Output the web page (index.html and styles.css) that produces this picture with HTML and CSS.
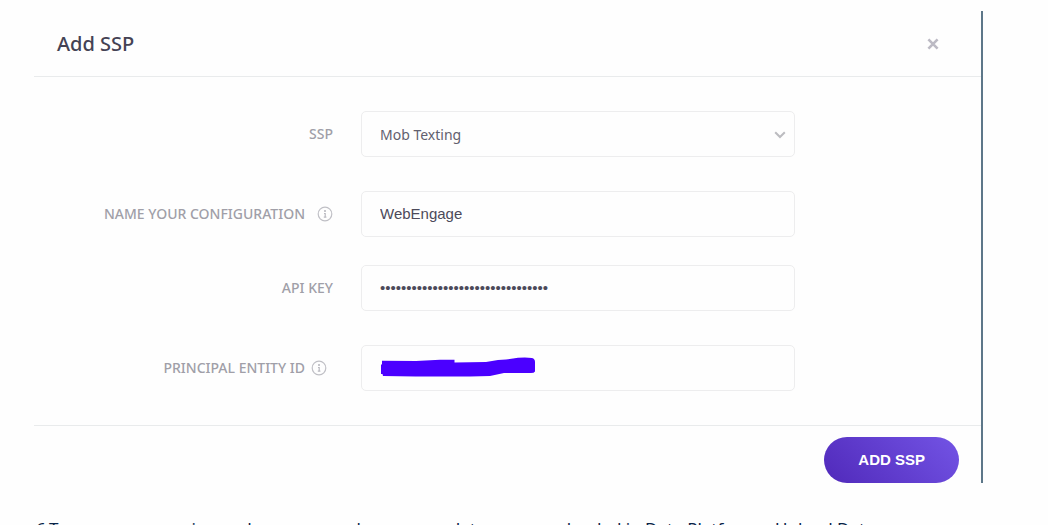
FILE: index.html
```html
<!DOCTYPE html>
<html lang="en">
<head>
<meta charset="utf-8">
<title>Add SSP</title>
<link rel="stylesheet" href="styles.css">
</head>
<body>
<main class="page">
  <section class="dialog" aria-labelledby="dialog-title">
    <header class="dialog-header">
      <h1 class="dialog-title" id="dialog-title">Add SSP</h1>
      <button class="close" type="button" aria-label="Close">
        <svg width="12" height="12" viewBox="0 0 12 12"><path d="M1.4 1.4 10.6 10.6M10.6 1.4 1.4 10.6" fill="none" stroke="#bcbac4" stroke-width="2.6"/></svg>
      </button>
    </header>
    <form class="form" id="ssp-form">
      <div class="row">
        <label class="label" for="ssp">SSP</label>
        <div class="field">
          <select class="control select" id="ssp"><option>Mob Texting</option></select>
          <svg class="chevron" width="12" height="8" viewBox="0 0 12 8"><path d="M1.2 1.2 6 6 10.8 1.2" fill="none" stroke="#bcbcc0" stroke-width="2"/></svg>
        </div>
      </div>
      <div class="row">
        <label class="label label-wide" for="name">NAME YOUR CONFIGURATION
          <svg class="info" width="16" height="16" viewBox="0 0 16 16"><circle cx="8" cy="8" r="6.8" fill="none" stroke="#c0c0c6" stroke-width="1.2"/><circle cx="8" cy="5" r="1" fill="#b4b4bb"/><path d="M7 7.500H8.200V11M6.800 11.100H9.400" fill="none" stroke="#b9b9c0" stroke-width="1.2"/></svg>
        </label>
        <div class="field"><input class="control" id="name" type="text" value="WebEngage"></div>
      </div>
      <div class="row row-close">
        <label class="label" for="key">API KEY</label>
        <div class="field"><input class="control" id="key" type="password" value="abcdefghijklmnopqrstuvwxyz012345"></div>
      </div>
      <div class="row">
        <label class="label label-inset" for="entity">PRINCIPAL ENTITY ID
          <svg class="info" width="16" height="16" viewBox="0 0 16 16"><circle cx="8" cy="8" r="6.8" fill="none" stroke="#c0c0c6" stroke-width="1.2"/><circle cx="8" cy="5" r="1" fill="#b4b4bb"/><path d="M7 7.500H8.200V11M6.800 11.100H9.400" fill="none" stroke="#b9b9c0" stroke-width="1.2"/></svg>
        </label>
        <div class="field">
          <input class="control" id="entity" type="text">
          <svg class="redaction" width="156" height="20" viewBox="0 0 156 20"><path d="M2 3.7 36 4 60 2.8H74.500V5.400L106 5 118 3 126 2.600 138 .8Q148 .3 152 1.100 155 2 155 5V14.500Q154 16 151 16H124L110 19 90 19.600H36L3 19 2.500 17H1V7.500H2Z" fill="#4b00ff"/></svg>
        </div>
      </div>
    </form>
    <footer class="dialog-footer">
      <button class="submit" type="submit" form="ssp-form">ADD SSP</button>
    </footer>
  </section>
  <p class="note">6.To use any campaign and ensure your key as user data as you uploaded in Data Platform &gt; Upload Data</p>
</main>
</body>
</html>
```
FILE: styles.css
```css
* {
  box-sizing: border-box;
}

body {
  margin: 0;
  background: #fefefe;
  color: #444254;
  font-family: "Noto Sans", "Open Sans", sans-serif;
}

.page {
  height: 100vh;
  overflow: hidden;
  padding: 11px 65px 0 34px;
}

.dialog {
  border-right: 2px solid #5d7789;
}

.dialog-header {
  display: flex;
  align-items: center;
  justify-content: space-between;
  padding: 17px 42px 17px 23px;
  border-bottom: 1px solid #e9ebec;
}

.dialog-title {
  margin: 0;
  font-size: 20px;
  line-height: 31px;
  font-weight: 500;
}

.close {
  display: flex;
  padding: 0;
  border: 0;
  background: none;
}

.form {
  padding: 34px 0;
}

.row {
  display: grid;
  grid-template-columns: 299fr 434fr 158fr;
  column-gap: 28px;
  align-items: center;
}

.row + .row {
  margin-top: 34px;
}

.row + .row-close {
  margin-top: 28px;
}

.label {
  display: flex;
  align-items: center;
  justify-content: flex-end;
  gap: 6px;
  color: #a09fa8;
  font-size: 14px;
  line-height: 20px;
  font-weight: 500;
  white-space: nowrap;
}

.label-wide {
  gap: 12px;
}

.label-inset {
  padding-right: 6px;
}

.field {
  position: relative;
}

.control {
  display: block;
  width: 100%;
  height: 46px;
  padding: 0 18px 2px;
  border: 1px solid #ededee;
  border-radius: 5px;
  background: #fefefe;
  color: #4c4a5a;
  font: 15px "Liberation Sans", Arial, sans-serif;
}

.select {
  appearance: none;
  padding-bottom: 0;
  color: #62606e;
  font-family: "Noto Sans", "Open Sans", sans-serif;
  font-size: 14px;
}

.chevron {
  position: absolute;
  top: 20px;
  right: 9px;
  pointer-events: none;
}

.redaction {
  position: absolute;
  top: 12px;
  left: 19px;
}

.dialog-footer {
  display: flex;
  justify-content: flex-end;
  padding: 11px 22px 0 0;
  border-top: 1px solid #e9ebec;
}

.submit {
  height: 46px;
  padding: 0 34px 2px;
  border: 0;
  border-radius: 23px;
  background: linear-gradient(45deg, #5029ba, #7354e5);
  color: #fff;
  font: bold 15px "Liberation Sans", Arial, sans-serif;
}

.note {
  margin: 34px 0 0 2px;
  color: #082347;
  font-size: 17px;
  line-height: 24px;
  white-space: nowrap;
}
```
